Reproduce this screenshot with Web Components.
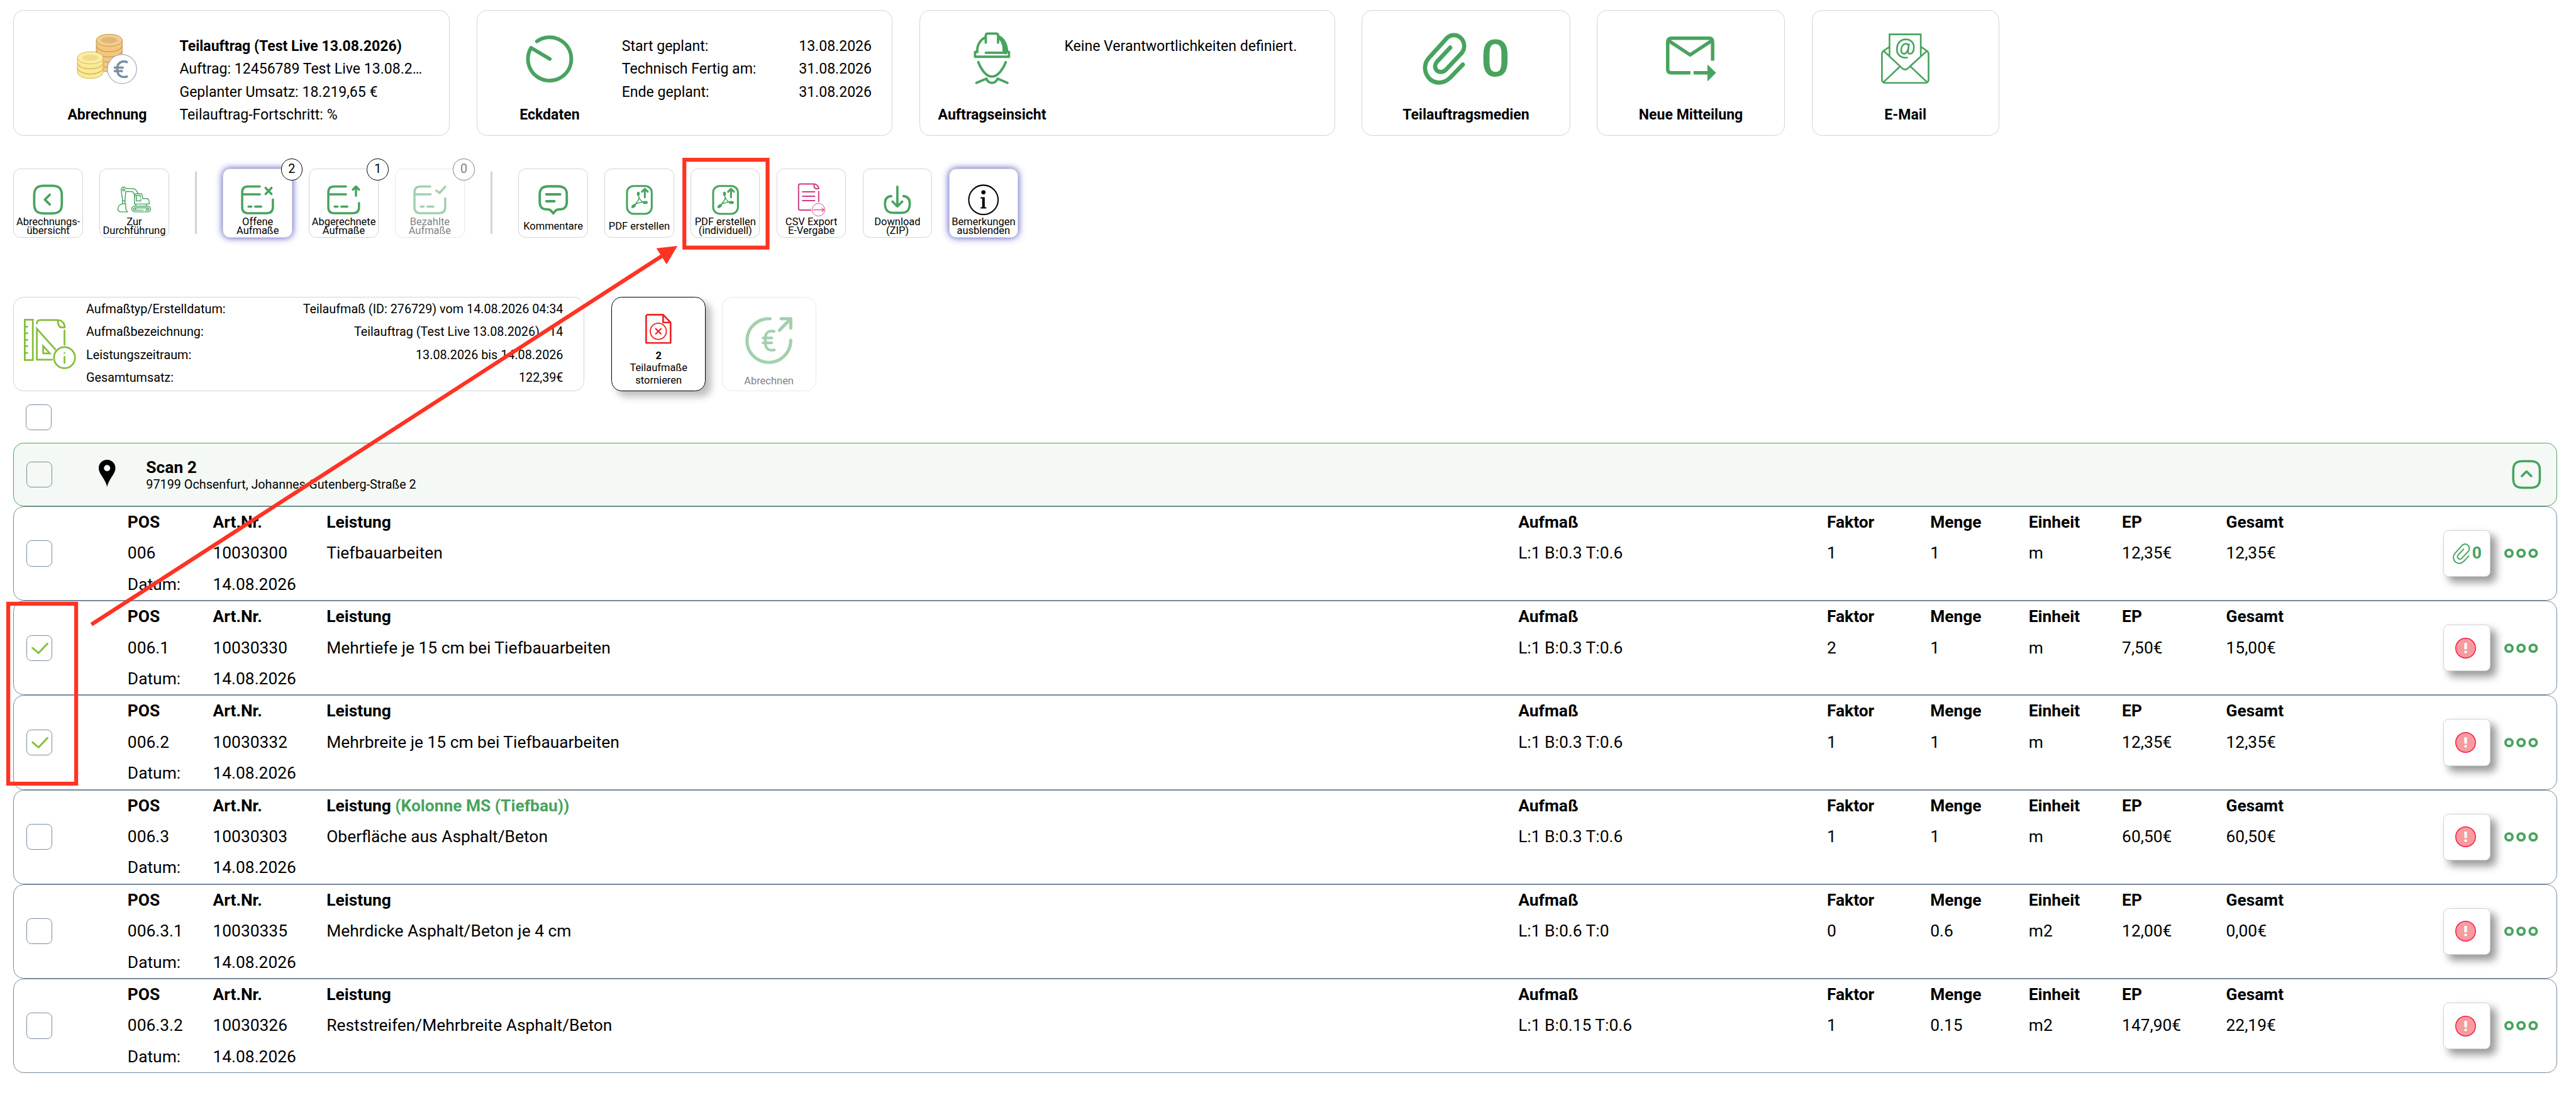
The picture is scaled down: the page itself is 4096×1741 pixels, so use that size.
<!DOCTYPE html>
<html lang="de">
<head>
<meta charset="utf-8">
<title>Abrechnung</title>
<style>
    html {
        background: #fff;
    }
    body {
        margin: 0;
        zoom: 1.64793;
        font-family: Roboto, "Liberation Sans", sans-serif;
        font-size: 14px;
        color: #000;
        overflow: hidden;
    }
</style>
</head>
<body>
<billing-page></billing-page>

<script>
const GREEN = '#48a35f';

// name: [viewBox, units per css pixel, markup]
const ICONS = {
    coins: ['133 57 106 89', 1.8, `
        <g stroke="#b98f4f" stroke-width="1">
            <path fill="#f3c77f" d="M167 69V113a22.5 11 0 0 0 45 0V69z"/>
            <path fill="none" stroke="#cf9a52" stroke-width="1.6" d="M167 78a22.5 11 0 0 0 45 0M167 87a22.5 11 0 0 0 45 0M167 96a22.5 11 0 0 0 45 0M167 105a22.5 11 0 0 0 45 0"/>
            <ellipse cx="189.5" cy="69" rx="22.5" ry="10.6" fill="#f5cd8a"/>
            <ellipse cx="189.5" cy="69" rx="14" ry="5.6" fill="#dfb878" stroke="none"/>
        </g>
        <g stroke="#c9b45c" stroke-width="1">
            <path fill="#fce997" d="M134.3 99.5V125a22.3 10.6 0 0 0 44.6 0V99.5z"/>
            <path fill="none" stroke="#d3b95a" stroke-width="1.6" d="M134.3 108a22.3 10.6 0 0 0 44.6 0M134.3 117a22.3 10.6 0 0 0 44.6 0"/>
            <ellipse cx="156.6" cy="99.5" rx="22.3" ry="10.6" fill="#ffeda0"/>
            <ellipse cx="156.6" cy="99.5" rx="14" ry="5.6" fill="#efdc8c" stroke="none"/>
        </g>
        <circle cx="211.7" cy="119" r="25.3" fill="#fff" stroke="#a3b0c2" stroke-width="1.4"/>
        <path fill="none" stroke="#7a8da3" stroke-width="4" d="M221.5 107.5C212 103 203.5 108.5 203.5 117.5V121C203.5 130.5 212 135.5 221.5 131.5M197.5 116.5H214.5M197.5 122.5H213"/>`],
    clock: ['910 57 90 90', 1.8, `<path fill="none" stroke="${GREEN}" stroke-width="6.4" stroke-linecap="round" stroke-linejoin="round" d="M932.7 72A37.7 37.7 0 1 1 922.4 83.2L955 102.5"/>`],
    helmet: ['91 46 200 281', 5.4, `
        <g fill="none" stroke="${GREEN}" stroke-width="12.5" stroke-linecap="round" stroke-linejoin="round">
            <path d="M113 148C113 116 130 88 156 77M158 104V66Q159 57 168 57H213Q222 58 222 66V104"/>
            <path stroke-linecap="butt" d="M120 153H102V178H279V153H262V165"/>
            <path d="M158 157H262M119 206C132 240 158 281 190 281S249 240 262 206M109 314L162 292C164 304 176 314 190 314S216 304 219 292L271 314"/>
        </g>
        <path fill="${GREEN}" d="M222 63C256 75 275 112 275 152H245C247 125 240 97 222 84z"/>`],
    clip: ['324 576 96 114', 5.4, `<path fill="none" stroke="${GREEN}" stroke-width="var(--stroke, 6.5)" stroke-linecap="round" stroke-linejoin="round" d="M411 645L384 673C372 685 355 687 342 677C328 664 327 645 338 632L374 592C383 580 398 580 406 588C416 597 416 612 408 621L375 656C369 662 361 662 356 658C350 652 351 645 356 639L384 609"/>`],
    send: ['0 0 87 78', 1.8, `
        <path fill="none" stroke="${GREEN}" stroke-width="6" d="M42.5 63H9Q3 63 3 57V10Q3 3 10 3H75Q81 3 81 10V42M4 7L42 32L80 7M48 63H73"/>
        <path fill="${GREEN}" d="M72 48.5L87 63L72 78z"/>`],
    mail: ['0 0 84 88', 1.8, `
        <g fill="none" stroke="${GREEN}" stroke-width="2.9">
            <path d="M14.7 39V1.7H69V39M14 24L4 30.5Q1.5 33 1.5 36V80Q1.5 86 7.5 86H76.5Q82.5 86 82.5 80V36Q82.5 33 80 30.5L70 24M4 30L37 61Q41.7 65 46.5 61L80 30M5 84L33.5 57M79 84L50.5 57"/>
            <path d="M46.5 42C35 44 27 37 27.5 27C28 17 34 10.5 43 10.5C52 10.5 57.5 17 57 25C56.5 32 54 35.5 50.5 35.5C47.5 35.5 46.5 33.5 47 30L48.5 18M48 22C46.5 18 43.5 17.5 41 18.5C37 20 35 25 35 29.5C35 35.5 40 37 43.5 34C45.5 32 46.5 29.5 47 27"/>
        </g>`],
    back: ['0 0 24 24', .75, `<path fill="none" stroke="${GREEN}" stroke-width="1.7" stroke-linecap="round" stroke-linejoin="round" d="M9 22h6c5 0 7-2 7-7V9c0-5-2-7-7-7H9C4 2 2 4 2 9v6c0 5 2 7 7 7zM13.26 15.53L9.74 12l3.52-3.53"/>`],
    up: ['0 0 24 24', .78, `<path fill="none" stroke="${GREEN}" stroke-width="1.7" stroke-linecap="round" stroke-linejoin="round" d="M9 22h6c5 0 7-2 7-7V9c0-5-2-7-7-7H9C4 2 2 4 2 9v6c0 5 2 7 7 7zM8.47 13.26L12 9.74l3.53 3.52"/>`],
    digger: ['69 41 181 140', 5.4, `
        <g fill="none" stroke="${GREEN}" stroke-width="4.8" stroke-linejoin="round" stroke-linecap="round">
            <circle cx="104" cy="61" r="5"/>
            <path d="M99 118L91 63C90 51 97 46 104 46C110 46 114 49 116 53L155 54C164 56 174 68 179 80M110 118L115 68L150 70C156 74 161 84 161 95"/>
            <path d="M98 118H111V133H98zM98 133C82 136 74 148 74 160C74 170 82 175 92 175H124C117 169 115 160 114 150V133"/>
            <path d="M163 88Q163 80 171 80H196Q201 82 203 106H228Q236 108 238 134H160V108zM193 98L190 89H170V118H193V108M167 134V144M222 134V144"/>
            <rect x="146" y="145" width="98" height="30" rx="15"/>
            <path d="M206 166H161a6 6 0 0 1 0-12H229a6 6 0 0 1 0 12H218M166 154V166M225 154V166"/>
        </g>`],
    cardX: ['713 27 180 168', 5.4, `<path fill="none" stroke="${GREEN}" stroke-width="11.5" stroke-linecap="round" d="M815 42H754C732 42 723 52 723 72V150C723 171 733 181 754 181H850C872 181 883 171 883 150V110M728 83H815M756 147H771M791 147H822M845 49L876 81M876 49L845 81"/>`],
    cardUp: ['713 27 180 168', 5.4, `<path fill="none" stroke="${GREEN}" stroke-width="11.5" stroke-linecap="round" stroke-linejoin="round" d="M815 42H754C732 42 723 52 723 72V150C723 171 733 181 754 181H850C872 181 883 171 883 150V128M728 83H815M756 147H771M791 147H822M867 90V44M851 58L867 42L883 58"/>`],
    cardOk: ['713 27 180 168', 5.4, `<path fill="none" stroke="${GREEN}" stroke-width="11.5" stroke-linecap="round" stroke-linejoin="round" d="M805 42H754C732 42 723 52 723 72V150C723 171 733 181 754 181H850C872 181 883 171 883 150V104M728 83H807M756 147H771M791 147H822M837 63L853 76L883 43"/>`],
    comment: ['-1 -1 54 54', 1.8, `<path fill="none" stroke="${GREEN}" stroke-width="4.2" stroke-linecap="round" stroke-linejoin="round" d="M18 2.5H34C45 2.5 49.5 7 49.5 17V29C49.5 39 45 42.5 37 42.5C32 42.5 31 43.5 26 49.5C21 43.5 20 42.5 15 42.5C7 42.5 2.5 39 2.5 29V17C2.5 7 7 2.5 18 2.5zM14 16.5H38M14 28.5H28"/>`],
    pdf: ['14 26 155 169', 5.4, `
        <g fill="none" stroke="${GREEN}" stroke-linecap="round" stroke-linejoin="round">
            <rect x="27" y="38" width="129" height="145" rx="34" stroke-width="10"/>
            <path stroke-width="10" d="M120 97V56M105 68L120 53L135 68"/>
            <path stroke-width="5" d="M86 84C88 103 100 119 115 124M91 98C86 112 76 128 64 139M66 135C82 127 98 122 115 122"/>
        </g>
        <g fill="${GREEN}">
            <ellipse cx="86" cy="79" rx="7.5" ry="11"/>
            <ellipse cx="122" cy="124" rx="13" ry="7.5"/>
            <ellipse cx="61" cy="143" rx="13" ry="8" transform="rotate(-38 61 143)"/>
        </g>`],
    csv: ['913 20 152 181', 5.4, `
        <g fill="none" stroke="#cf3a83" stroke-width="6.5" stroke-linecap="round" stroke-linejoin="round">
            <path d="M1003 28H931Q922 28 922 37V156Q922 164 931 164H986M1003 28C1015 28 1027 40 1027 53H1014Q1003 51 1003 40zM1027 67V120M943 69H1006M943 92H1006M943 115H1006"/>
            <path stroke-width="3.4" d="M1000 163H1053M1044 153L1054 163L1044 173"/>
            <circle cx="1026" cy="162.5" r="33" stroke-width="3"/>
        </g>`],
    download: ['-1 -1 50 52', 1.8, `<path fill="none" stroke="${GREEN}" stroke-width="4" stroke-linecap="round" stroke-linejoin="round" d="M13.5 18.5C5 19 2.5 24 2.5 31C2.5 44 8 47.5 19 47.5H29C40 47.5 45.5 44 45.5 31C45.5 24 43 19 34.5 18.5M24 2V36M15.5 28L24 36.5L32.5 28"/>`],
    info: ['0 0 54 54', 1.8, `
        <circle cx="27" cy="27" r="25.5" fill="none" stroke="#000" stroke-width="2.2"/>
        <circle cx="27" cy="14" r="3.6"/>
        <path d="M22 22.5H29.3V40H32V42H22V40H24.8V24.5H22z"/>`],
    measure: ['0 0 91 88', 1.8, `
        <g fill="none" stroke="#86be3c" stroke-width="3" stroke-linecap="round">
            <rect x="1.5" y="1.5" width="14" height="70"/>
            <path d="M2 13.5H6M2 25H6M2 36.5H6M2 47.5H6M2 59H6M22.5 8Q22.5 2 28.5 2H59C66 2 71 8 71 15H66C61 15 59 10 59 2M70.5 20V45"/>
            <path d="M49 71H22.5V17L54.5 53M33.5 47V60H45z"/>
            <circle cx="70.5" cy="67.3" r="18.3"/>
            <path d="M70.5 59V59.2M70.5 66V76.5"/>
        </g>`],
    storno: ['0 0 46 52', 1.8, `
        <g fill="none" stroke="#ee2224" stroke-width="2.9" stroke-linejoin="round">
            <path d="M3.5 1.5H31L44 15V50.5H1.5V3.5zM31 2V15H44"/>
            <circle cx="22.7" cy="30.3" r="14" stroke-width="2"/>
            <path stroke-width="2.4" d="M17.5 25.3L28 35.6M28 25.3L17.5 35.6"/>
        </g>`],
    euro: ['0 0 82 82', 1.8, `
        <g fill="none" stroke="${GREEN}" stroke-width="5.6" stroke-linecap="round" stroke-linejoin="round">
            <path d="M43 3A38 38 0 1 0 79 40.5M62.5 3H79V19M78 4L59.5 23"/>
            <path stroke-width="4.6" d="M50 25C41 22.5 35 27.5 35 36V46C35 55 41 59.5 50.5 57M31 36.5H46M31 45H46"/>
        </g>`],
    pin: ['0 0 29 47', 1.8, `<path fill-rule="evenodd" d="M14.5 0C6.5 0 0 6 0 14.5C0 25 11.5 33 14.5 47C17.5 33 29 25 29 14.5C29 6 22.5 0 14.5 0zM14.5 9a5.5 5.5 0 1 0 0 11a5.5 5.5 0 1 0 0-11z"/>`],
    alert: ['0 0 108 108', 5.4, `
        <circle cx="54" cy="54" r="51.5" fill="#f69c9e" stroke="#ff1a4b" stroke-width="5"/>
        <path fill="#fff" d="M47 27H61V60H47z"/><circle cx="54" cy="74" r="7" fill="#fff"/>`],
    dots: ['0 0 175 50', 5.4, `
        <g fill="none" stroke="${GREEN}" stroke-width="13">
            <circle cx="24.5" cy="25" r="18"/><circle cx="87.5" cy="25" r="18"/><circle cx="150.5" cy="25" r="18"/>
        </g>`],
    check: ['0 0 45 45', 1.8, `<path fill="none" stroke="#86be3c" stroke-width="3.2" stroke-linecap="round" stroke-linejoin="round" d="M9.5 21L20 29.8L35.5 13.5"/>`]
};

class UiIcon extends HTMLElement {
    constructor() {
        super();
        this.attachShadow({ mode: 'open' });
    }

    connectedCallback() {
        const [box, units, markup] = ICONS[this.getAttribute('name')];
        const scale = Number(this.getAttribute('scale') || 1) / units;
        const [, , w, h] = box.split(' ').map(Number);
        this.shadowRoot.innerHTML = `
            <style>
                :host { display: block; flex: none; }
                svg { display: block; overflow: visible; }
            </style>
            <svg viewBox="${box}" width="${w * scale}" height="${h * scale}">${markup}</svg>
        `;
    }
}

class InfoCard extends HTMLElement {
    constructor() {
        super();
        this.attachShadow({ mode: 'open' });
    }

    connectedCallback() {
        this.shadowRoot.innerHTML = `
            <style>
                :host {
                    display: flex;
                    box-sizing: border-box;
                    height: 121.2px;
                    padding: 0 19.3px 0 0;
                    border: 1px solid #d3d3d3;
                    border-radius: 10px;
                    line-height: 22px;
                    white-space: nowrap;
                }
                .side {
                    display: flex;
                    flex-direction: column;
                    align-items: center;
                    flex: none;
                    width: var(--side, 139.4px);
                    padding-left: var(--indent, 0);
                    box-sizing: border-box;
                }
                .icon {
                    display: flex;
                    align-items: center;
                    justify-content: center;
                    gap: 13.5px;
                    height: 50px;
                    margin-top: 21px;
                    font-size: 50px;
                    font-weight: 500;
                    color: ${GREEN};
                }
                .label {
                    margin-top: 18.4px;
                    font-weight: bold;
                }
                .body {
                    flex: 1;
                    padding-top: 23.4px;
                }
            </style>
            <div class="side">
                <div class="icon"><slot name="icon"></slot></div>
                <div class="label">${this.getAttribute('label')}</div>
            </div>
            <div class="body"><slot></slot></div>
        `;
    }
}

class KeyValue extends HTMLElement {
    constructor() {
        super();
        this.attachShadow({ mode: 'open' });
    }

    connectedCallback() {
        this.shadowRoot.innerHTML = `
            <style>
                :host { display: flex; justify-content: space-between; }
            </style>
            <span>${this.getAttribute('key')}</span>
            <span><slot></slot></span>
        `;
    }
}

class ToolButton extends HTMLElement {
    constructor() {
        super();
        this.attachShadow({ mode: 'open' });
    }

    connectedCallback() {
        const badge = this.getAttribute('badge');
        this.shadowRoot.innerHTML = `
            <style>
                :host {
                    display: flex;
                    flex-direction: column;
                    align-items: center;
                    position: relative;
                    box-sizing: border-box;
                    width: 67px;
                    height: 67px;
                    border: 1px solid #d3d3d3;
                    border-radius: 7px;
                    background: #fff;
                    font-size: 10px;
                    line-height: 8.5px;
                    text-align: center;
                    white-space: nowrap;
                }
                :host([active]) { box-shadow: 0 0 7px #4a4cc4; }
                :host([disabled]) { opacity: .5; }
                .icon {
                    display: flex;
                    align-items: center;
                    height: 34px;
                    margin-top: 12.8px;
                }
                .label {
                    display: flex;
                    align-items: center;
                    height: 17px;
                    margin-top: .4px;
                }
                .badge {
                    position: absolute;
                    left: 55.3px;
                    top: -10px;
                    box-sizing: border-box;
                    width: 21px;
                    height: 21px;
                    border: 1px solid #000;
                    border-radius: 50%;
                    background: #fff;
                    font-size: 12px;
                    line-height: 20px;
                }
            </style>
            <div class="icon"><ui-icon name="${this.getAttribute('icon')}"></ui-icon></div>
            <div class="label"><span><slot></slot></span></div>
            ${badge ? `<div class="badge">${badge}</div>` : ''}
        `;
    }
}

class ActionTile extends HTMLElement {
    constructor() {
        super();
        this.attachShadow({ mode: 'open' });
    }

    connectedCallback() {
        this.shadowRoot.innerHTML = `
            <style>
                :host {
                    display: flex;
                    flex-direction: column;
                    align-items: center;
                    justify-content: space-between;
                    box-sizing: border-box;
                    width: 91px;
                    height: 91px;
                    padding: 15.8px 0 4.1px;
                    border: 1px solid #000;
                    border-radius: 10px;
                    background: #fff;
                    box-shadow: 5px 5px 7px rgba(0, 0, 0, .25);
                    font-size: 10px;
                    line-height: 11.7px;
                    text-align: center;
                }
                :host([disabled]) {
                    padding: 19px 0 3.4px;
                    border-color: #d3d3d3;
                    box-shadow: none;
                    opacity: .5;
                }
            </style>
            <ui-icon name="${this.getAttribute('icon')}"></ui-icon>
            <div><slot></slot></div>
        `;
    }
}

class CheckBox extends HTMLElement {
    constructor() {
        super();
        this.attachShadow({ mode: 'open' });
    }

    connectedCallback() {
        this.shadowRoot.innerHTML = `
            <style>
                :host {
                    display: grid;
                    place-items: center;
                    flex: none;
                    box-sizing: border-box;
                    width: 25px;
                    height: 25px;
                    border: 1px solid #778ba0;
                    border-radius: 5px;
                }
            </style>
            ${this.hasAttribute('checked') ? '<ui-icon name="check"></ui-icon>' : ''}
        `;
    }
}

class ScanHeader extends HTMLElement {
    constructor() {
        super();
        this.attachShadow({ mode: 'open' });
    }

    connectedCallback() {
        this.shadowRoot.innerHTML = `
            <style>
                :host {
                    display: flex;
                    align-items: center;
                    box-sizing: border-box;
                    height: 61px;
                    padding: 0 13.5px 0 11.9px;
                    border: 1px solid ${GREEN};
                    border-radius: 10px;
                    background: #f4f9f5;
                }
                .pin { margin: -3px 0 0 45px; }
                .text { flex: 1; margin-left: 29.4px; font-size: 12px; line-height: 14.4px; margin-top: .6px; }
                .name { font-size: 16px; font-weight: bold; line-height: 18.5px; }
            </style>
            <check-box></check-box>
            <ui-icon class="pin" name="pin"></ui-icon>
            <div class="text">
                <div class="name">${this.getAttribute('name')}</div>
                <div>${this.getAttribute('address')}</div>
            </div>
            <ui-icon name="up"></ui-icon>
        `;
    }
}

class PositionRow extends HTMLElement {
    constructor() {
        super();
        this.attachShadow({ mode: 'open' });
    }

    connectedCallback() {
        const get = name => this.getAttribute(name) || '';
        const crew = get('crew') ? ` <span class="crew">${get('crew')}</span>` : '';
        const action = this.hasAttribute('files')
            ? `<ui-icon name="clip"></ui-icon><b>${get('files')}</b>`
            : '<ui-icon name="alert"></ui-icon>';
        this.shadowRoot.innerHTML = `
            <style>
                :host {
                    display: flex;
                    align-items: center;
                    box-sizing: border-box;
                    height: 91.15px;
                    padding: 0 17.7px 0 11.9px;
                    border: 1px solid #778899;
                    border-radius: 10px;
                    font-size: 16px;
                    line-height: 30px;
                    white-space: nowrap;
                }
                .grid {
                    display: grid;
                    flex: 1;
                    grid-template-columns: 82.3px 109.7px 1149.9px 297.8px 99.7px 95px 90px 100.4px 1fr;
                    margin-left: 72.6px;
                }
                .crew { color: ${GREEN}; }
                .action {
                    display: flex;
                    align-items: center;
                    justify-content: center;
                    gap: 1.5px;
                    box-sizing: border-box;
                    width: 45px;
                    height: 45px;
                    margin-right: 13.7px;
                    border: 1px solid #d3d3d3;
                    border-radius: 5px;
                    background: #fff;
                    box-shadow: 5px 5px 8px rgba(0, 0, 0, .4);
                    color: ${GREEN};
                }
                .alert { padding-right: 3px; }
            </style>
            <check-box ${this.hasAttribute('checked') ? 'checked' : ''}></check-box>
            <div class="grid">
                <b>POS</b><b>Art.Nr.</b><b>Leistung${crew}</b><b>Aufmaß</b><b>Faktor</b><b>Menge</b><b>Einheit</b><b>EP</b><b>Gesamt</b>
                <span>${get('pos')}</span><span>${get('art')}</span><span>${get('name')}</span><span>${get('size')}</span><span>${get('factor')}</span><span>${get('amount')}</span><span>${get('unit')}</span><span>${get('price')}</span><span>${get('total')}</span>
                <span>Datum:</span><span>14.08.2026</span>
            </div>
            <div class="action ${this.hasAttribute('files') ? '' : 'alert'}">${action}</div>
            <ui-icon name="dots"></ui-icon>
        `;
    }
}

// Red markers that lie over the page: two frames and the arrow between them
class MarkerLayer extends HTMLElement {
    constructor() {
        super();
        this.attachShadow({ mode: 'open' });
    }

    connectedCallback() {
        this.shadowRoot.innerHTML = `
            <style>
                :host { position: absolute; left: 0; top: 0; pointer-events: none; }
                svg { display: block; }
            </style>
            <svg viewBox="0 0 4474 1902" width="2485.56" height="1056.67" fill="none" stroke="#ff3323" stroke-width="6.8">
                <rect x="14.3" y="1048.5" width="118" height="312.5"/>
                <rect x="1188.6" y="277.5" width="144.5" height="152.5"/>
                <path d="M158.8 1084.6L1152 443"/>
                <path fill="#ff3323" stroke="none" d="M1176.7 427L1140 431.3L1157.7 459z"/>
            </svg>
        `;
    }
}

class BillingPage extends HTMLElement {
    constructor() {
        super();
        this.attachShadow({ mode: 'open' });
    }

    connectedCallback() {
        this.shadowRoot.innerHTML = `
            <style>
                :host {
                    display: flex;
                    flex-direction: column;
                    position: relative;
                    box-sizing: border-box;
                    width: 2485.56px;
                    height: 1056.67px;
                    padding: 10px 18.4px 0 13px;
                }
                .cards { display: flex; gap: 26px; }
                .tools { display: flex; align-items: center; gap: 16.05px; margin-top: 31.2px; }
                .tools i { width: 2px; height: 60px; margin: 0 9px; background: #d3d3d3; }
                .summary { display: flex; margin-top: 56.9px; }
                .facts {
                    display: flex;
                    align-items: center;
                    box-sizing: border-box;
                    width: 551px;
                    height: 91px;
                    margin-right: 26px;
                    padding: 0 20px 0 9.5px;
                    border: 1px solid #d3d3d3;
                    border-radius: 10px;
                    font-size: 12px;
                    line-height: 22px;
                }
                .facts ui-icon { margin-top: 1px; }
                .facts div { flex: 1; margin-left: 9.5px; }
                action-tile + action-tile { margin-left: 15.4px; }
                .all { margin: 12.7px 0 12.5px 12px; }
            </style>
            <div class="cards">
                <info-card label="Abrechnung" style="width: 421px; --side: 159.6px; --indent: 20px">
                    <ui-icon slot="icon" name="coins"></ui-icon>
                    <b>Teilauftrag (Test Live 13.08.2026)</b><br>
                    Auftrag: 12456789 Test Live 13.08.2…<br>
                    Geplanter Umsatz: 18.219,65 €<br>
                    Teilauftrag-Fortschritt: %
                </info-card>
                <info-card label="Eckdaten" style="width: 401px">
                    <ui-icon slot="icon" name="clock"></ui-icon>
                    <key-value key="Start geplant:">13.08.2026</key-value>
                    <key-value key="Technisch Fertig am:">31.08.2026</key-value>
                    <key-value key="Ende geplant:">31.08.2026</key-value>
                </info-card>
                <info-card label="Auftragseinsicht" style="width: 401px">
                    <ui-icon slot="icon" name="helmet"></ui-icon>
                    Keine Verantwortlichkeiten definiert.
                </info-card>
                <info-card label="Teilauftragsmedien" style="width: 201px; padding: 0; --side: 100%">
                    <ui-icon slot="icon" name="clip" scale="2.45" style="--stroke: 9"></ui-icon>
                    <span slot="icon">0</span>
                </info-card>
                <info-card label="Neue Mitteilung" style="width: 181px; padding: 0; --side: 100%">
                    <ui-icon slot="icon" name="send"></ui-icon>
                </info-card>
                <info-card label="E-Mail" style="width: 181px; padding: 0; --side: 100%">
                    <ui-icon slot="icon" name="mail"></ui-icon>
                </info-card>
            </div>
            <div class="tools">
                <tool-button icon="back">Abrechnungs-<br>übersicht</tool-button>
                <tool-button icon="digger">Zur<br>Durchführung</tool-button>
                <i></i>
                <tool-button icon="cardX" badge="2" active>Offene<br>Aufmaße</tool-button>
                <tool-button icon="cardUp" badge="1">Abgerechnete<br>Aufmaße</tool-button>
                <tool-button icon="cardOk" badge="0" disabled>Bezahlte<br>Aufmaße</tool-button>
                <i></i>
                <tool-button icon="comment">Kommentare</tool-button>
                <tool-button icon="pdf">PDF erstellen</tool-button>
                <tool-button icon="pdf">PDF erstellen<br>(individuell)</tool-button>
                <tool-button icon="csv">CSV Export<br>E-Vergabe</tool-button>
                <tool-button icon="download">Download<br>(ZIP)</tool-button>
                <tool-button icon="info" active>Bemerkungen<br>ausblenden</tool-button>
            </div>
            <div class="summary">
                <div class="facts">
                    <ui-icon name="measure"></ui-icon>
                    <div>
                        <key-value key="Aufmaßtyp/Erstelldatum:">Teilaufmaß (ID: 276729) vom 14.08.2026 04:34</key-value>
                        <key-value key="Aufmaßbezeichnung:">Teilauftrag (Test Live 13.08.2026) - 14</key-value>
                        <key-value key="Leistungszeitraum:">13.08.2026 bis 14.08.2026</key-value>
                        <key-value key="Gesamtumsatz:">122,39€</key-value>
                    </div>
                </div>
                <action-tile icon="storno"><b>2</b><br>Teilaufmaße<br>stornieren</action-tile>
                <action-tile icon="euro" disabled>Abrechnen</action-tile>
            </div>
            <check-box class="all"></check-box>
            <scan-header name="Scan 2" address="97199 Ochsenfurt, Johannes-Gutenberg-Straße 2"></scan-header>
            <position-row pos="006" art="10030300" name="Tiefbauarbeiten" size="L:1 B:0.3 T:0.6" factor="1" amount="1" unit="m" price="12,35€" total="12,35€" files="0"></position-row>
            <position-row pos="006.1" art="10030330" name="Mehrtiefe je 15 cm bei Tiefbauarbeiten" size="L:1 B:0.3 T:0.6" factor="2" amount="1" unit="m" price="7,50€" total="15,00€" checked></position-row>
            <position-row pos="006.2" art="10030332" name="Mehrbreite je 15 cm bei Tiefbauarbeiten" size="L:1 B:0.3 T:0.6" factor="1" amount="1" unit="m" price="12,35€" total="12,35€" checked></position-row>
            <position-row pos="006.3" art="10030303" name="Oberfläche aus Asphalt/Beton" crew="(Kolonne MS (Tiefbau))" size="L:1 B:0.3 T:0.6" factor="1" amount="1" unit="m" price="60,50€" total="60,50€"></position-row>
            <position-row pos="006.3.1" art="10030335" name="Mehrdicke Asphalt/Beton je 4 cm" size="L:1 B:0.6 T:0" factor="0" amount="0.6" unit="m2" price="12,00€" total="0,00€"></position-row>
            <position-row pos="006.3.2" art="10030326" name="Reststreifen/Mehrbreite Asphalt/Beton" size="L:1 B:0.15 T:0.6" factor="1" amount="0.15" unit="m2" price="147,90€" total="22,19€"></position-row>
            <marker-layer></marker-layer>
        `;
    }
}

customElements.define('ui-icon', UiIcon);
customElements.define('info-card', InfoCard);
customElements.define('key-value', KeyValue);
customElements.define('tool-button', ToolButton);
customElements.define('action-tile', ActionTile);
customElements.define('check-box', CheckBox);
customElements.define('scan-header', ScanHeader);
customElements.define('position-row', PositionRow);
customElements.define('marker-layer', MarkerLayer);
customElements.define('billing-page', BillingPage);
</script>
</body>
</html>
